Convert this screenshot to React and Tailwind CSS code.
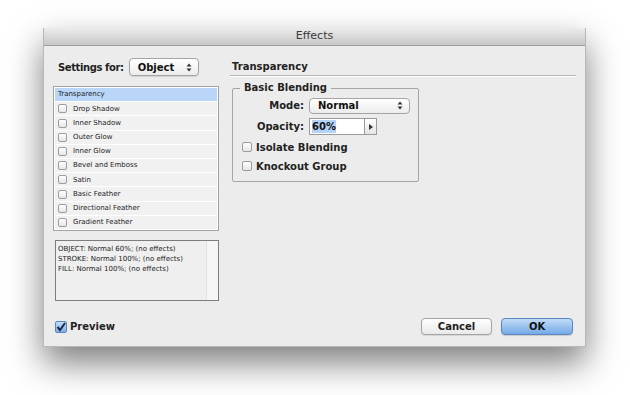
import React from 'react';

const EFFECTS = ['Drop Shadow', 'Inner Shadow', 'Outer Glow', 'Inner Glow', 'Bevel and Emboss', 'Satin', 'Basic Feather', 'Directional Feather', 'Gradient Feather'];
const FONT = { fontFamily: '"DejaVu Sans", "Liberation Sans", sans-serif' };

function Arrows() {
  return (
    <svg width="6" height="9" viewBox="0 0 6 9" className="shrink-0">
      <path d="M3 0.5 L5.5 3.5 L0.5 3.5 Z" fill="#333" />
      <path d="M3 8.5 L5.5 5.5 L0.5 5.5 Z" fill="#333" />
    </svg>
  );
}

function Box({ size = 'w-[10px] h-[10px]' }) {
  return <span className={`${size} shrink-0 rounded-[2px] border border-[#9c9c9c] bg-gradient-to-b from-white to-[#e6e6e6]`} />;
}

export default function App() {
  return (
    <div className="w-[630px] h-[395px] bg-white overflow-hidden pt-[28px] pl-[43px]" style={FONT}>
      <div className="w-[543px] h-[319px] bg-[#ececec] flex flex-col shadow-[0_16px_32px_rgba(0,0,0,0.5)] border-x border-b border-[#b8b8b8]">
        {/* title bar */}
        <div className="h-[18px] shrink-0 bg-gradient-to-b from-[#ececec] to-[#c8c8c8] border-b border-[#9d9d9d] flex items-center justify-center text-[11px] text-[#3a3a3a]">
          Effects
        </div>

        <div className="flex flex-1">
          {/* left column */}
          <div className="w-[166px] ml-[9px] mt-[12px] flex flex-col">
            <div className="flex items-center h-[18px] pl-[5px] gap-[5px]">
              <span className="text-[10px] font-bold text-[#222] tracking-[-0.4px]">Settings for:</span>
              <div className="w-[70px] h-[18px] rounded-[4px] border border-[#a5a5a5] bg-gradient-to-b from-white to-[#ececec] flex items-center justify-between pl-[8px] pr-[6px] shadow-[0_1px_1px_rgba(0,0,0,0.12)]">
                <span className="text-[10px] font-bold text-[#111]">Object</span>
                <Arrows />
              </div>
            </div>

            <div className="mt-[10px] h-[145px] border border-[#a2a2a2] bg-white flex flex-col p-[1px] gap-px">
              <div className="h-[13.3px] bg-[#b9d6f8] flex items-center pl-[3px] text-[7px] text-[#222]">Transparency</div>
              {EFFECTS.map((e) => (
                <div key={e} className="h-[13.3px] bg-[#f1f1f1] flex items-center pl-[3px] gap-[6px] text-[7px] text-[#222]">
                  <Box size="w-[9px] h-[9px]" />
                  {e}
                </div>
              ))}
            </div>

            <div className="mt-[9px] ml-[2px] h-[61px] border border-[#7d7d7d] bg-[#efefef] flex">
              <div className="flex-1 pl-[2px] pt-[3px] text-[7px] leading-[10px] text-[#222]">
                <div>OBJECT: Normal 60%; (no effects)</div>
                <div>STROKE: Normal 100%; (no effects)</div>
                <div>FILL: Normal 100%; (no effects)</div>
              </div>
              <div className="w-[12px] bg-[#f6f6f6] border-l border-[#e2e2e2]" />
            </div>
          </div>

          {/* right column */}
          <div className="ml-[11px] mt-[14px] w-[346px] flex flex-col">
            <div className="text-[10px] font-bold text-[#222] pl-[2px] leading-[13px]">Transparency</div>
            <div className="mt-[2px] h-[2px] border-t border-[#b5b5b5] border-b border-b-white" />

            <div className="relative mt-[11px] ml-[2px] w-[187px] h-[94px] border border-[#a5a5a5] rounded-[2px]">
              <span className="absolute -top-[8px] left-[7px] px-[4px] bg-[#ececec] text-[10px] font-bold text-[#222] leading-[14px]">Basic Blending</span>
              <div className="flex flex-col pt-[8px] pl-[9px]">
                <div className="flex items-center h-[17px]">
                  <span className="w-[62px] text-right text-[10px] font-bold text-[#222]">Mode:</span>
                  <div className="ml-[5px] w-[101px] h-[16px] rounded-[4px] border border-[#a5a5a5] bg-gradient-to-b from-white to-[#ececec] flex items-center justify-between pl-[8px] pr-[6px]">
                    <span className="text-[10px] font-bold text-[#111]">Normal</span>
                    <Arrows />
                  </div>
                </div>
                <div className="flex items-center h-[17px] mt-[4px]">
                  <span className="w-[62px] text-right text-[10px] font-bold text-[#222]">Opacity:</span>
                  <div className="ml-[5px] w-[56px] h-[17px] border border-[#9a9a9a] bg-white flex items-center pl-[2px]">
                    <span className="bg-[#b4d3f7] text-[10px] font-bold text-[#111] leading-[13px]">60%</span>
                  </div>
                  <div className="w-[12px] h-[17px] border border-l-0 border-[#9a9a9a] bg-gradient-to-b from-white to-[#e4e4e4] flex items-center justify-center">
                    <svg width="4" height="6" viewBox="0 0 4 6"><path d="M0 0 L4 3 L0 6 Z" fill="#333" /></svg>
                  </div>
                </div>
                <div className="flex items-center gap-[4px] mt-[6px] h-[12px]">
                  <Box />
                  <span className="text-[10px] font-bold text-[#222]">Isolate Blending</span>
                </div>
                <div className="flex items-center gap-[4px] mt-[7px] h-[12px]">
                  <Box />
                  <span className="text-[10px] font-bold text-[#222]">Knockout Group</span>
                </div>
              </div>
            </div>
          </div>
        </div>

        {/* bottom row */}
        <div className="h-[29px] mb-[5px] flex items-center pl-[11px] pr-[12px]">
          <div className="flex items-center gap-[3px]">
            <span className="w-[12px] h-[12px] rounded-[2px] border border-[#5b86c0] bg-gradient-to-b from-[#c6dcf6] to-[#7eaee6] flex items-center justify-center">
              <svg width="10" height="10" viewBox="0 0 10 10"><path d="M1.5 5 L4 8 L9 1" stroke="#1b2a4a" strokeWidth="2" fill="none" /></svg>
            </span>
            <span className="text-[10px] font-bold text-[#222]">Preview</span>
          </div>
          <div className="ml-auto flex items-center gap-[9px]">
            <button className="w-[71px] h-[17px] rounded-[4px] border border-[#a4a4a4] bg-gradient-to-b from-white to-[#e9e9e9] text-[10px] font-bold text-[#222] shadow-[0_1px_1px_rgba(0,0,0,0.1)]">Cancel</button>
            <button className="w-[72px] h-[17px] rounded-[4px] border border-[#5c86c2] bg-gradient-to-b from-[#c3dcf8] to-[#74a9e6] text-[10px] font-bold text-[#111] shadow-[0_1px_1px_rgba(0,0,0,0.15)]">OK</button>
          </div>
        </div>
      </div>
    </div>
  );
}
